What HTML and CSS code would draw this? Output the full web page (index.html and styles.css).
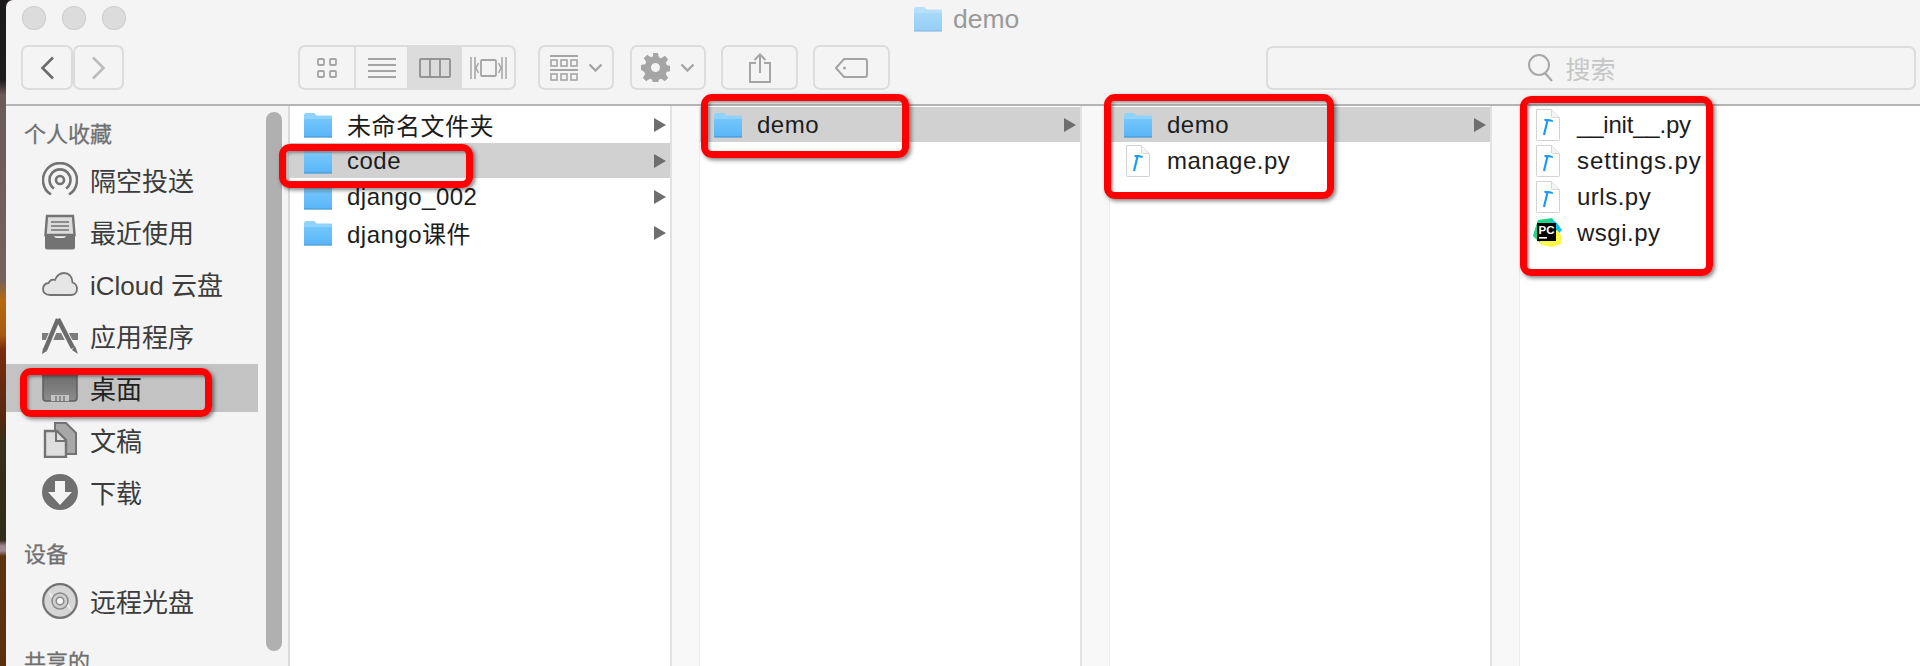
FILE: index.html
```html
<!DOCTYPE HTML>
<html>
	<head>
		<title>demo</title>
		<meta charset="UTF-8">
		<link rel="stylesheet" href="styles.css">
	</head>
	<body>
		<svg class="defs" width="0" height="0">
			<defs>
				<linearGradient id="folderFill" x1="0" y1="0" x2="0" y2="1">
					<stop offset="0" stop-color="#74c6fb"/>
					<stop offset="1" stop-color="#58b5f8"/>
				</linearGradient>
				<linearGradient id="deskFill" x1="0" y1="0" x2="0" y2="1">
					<stop offset="0" stop-color="#6a6a6a"/>
					<stop offset="1" stop-color="#8c8c8c"/>
				</linearGradient>
				<symbol id="folder" viewBox="0 0 30 26">
					<path d="M1 3.5C1 2 2 1 3.5 1h6.5c1.2 0 1.8.5 2.6 1.4l1 1.1H28c.6 0 1 .4 1 1V25H1z" fill="#8fd2fb"/>
					<path d="M1 7h28v17.2c0 .7-.4 1.1-1 1.1H2c-.6 0-1-.4-1-1.1z" fill="url(#folderFill)"/>
					<path d="M1 24.4h28v.6c0 .3-.3.6-.7.6H1.7c-.4 0-.7-.3-.7-.6z" fill="#3f93d0"/>
				</symbol>
				<symbol id="pyfile" viewBox="0 0 30 32">
					<path d="M3.5 .5h15l8 8v22a1 1 0 0 1-1 1h-21a1 1 0 0 1-1-1z" fill="#fff" stroke="#d2d2d2"/>
					<path d="M18.500 .5v7a1 1 0 0 0 1 1h7" fill="#f4f4f4" stroke="#d8d8d8"/>
					<path d="M11 26L14.600 11" stroke="#1c9bf0" stroke-width="2.200" fill="none"/>
					<path d="M11 10.400C13.500 9.800 17 10 20 11.400L19.800 13C18 12.300 15.500 12 12 12.200z" fill="#1c9bf0"/>
				</symbol>
				<symbol id="arrow" viewBox="0 0 12 14">
					<path d="M0 0L12 7L0 14z"/>
				</symbol>
				<symbol id="updown" viewBox="0 0 15 9">
					<path d="M1.5 1.5L7.5 7.5L13.5 1.5" fill="none" stroke="#a5a5a5" stroke-width="2.4"/>
				</symbol>
			</defs>
		</svg>

		<div class="desktop"></div>

		<div class="window">
			<div class="titlebar">
				<span class="light"></span>
				<span class="light"></span>
				<span class="light"></span>
				<div class="title">
					<svg class="title-folder" width="30" height="26"><use href="#folder"/></svg>
					<span>demo</span>
				</div>
			</div>

			<div class="toolbar">
				<div class="tool-group nav">
					<div class="tool nav-btn">
						<svg width="15" height="24" viewBox="0 0 15 24"><path d="M13 1.5L2.5 12L13 22.5" fill="none" stroke="#6c6c6c" stroke-width="2.6"/></svg>
					</div>
					<div class="tool nav-btn">
						<svg width="15" height="24" viewBox="0 0 15 24"><path d="M2 1.5L12.5 12L2 22.5" fill="none" stroke="#bcbcbc" stroke-width="2.6"/></svg>
					</div>
				</div>

				<div class="tool-group views">
					<div class="view view-icons">
						<svg width="20" height="20" viewBox="0 0 20 20" fill="none" stroke="#a5a5a5" stroke-width="1.8">
							<rect x="1" y="1" width="6" height="6" rx="1"/><rect x="13" y="1" width="6" height="6" rx="1"/>
							<rect x="1" y="13" width="6" height="6" rx="1"/><rect x="13" y="13" width="6" height="6" rx="1"/>
						</svg>
					</div>
					<div class="view view-list">
						<svg width="28" height="20" viewBox="0 0 28 20" stroke="#a5a5a5" stroke-width="2">
							<path d="M0 1h28M0 7h28M0 13h28M0 19h28"/>
						</svg>
					</div>
					<div class="view view-columns current">
						<svg width="32" height="20" viewBox="0 0 32 20" fill="none" stroke="#969696" stroke-width="2">
							<rect x="1" y="1" width="30" height="18" rx="1"/><path d="M11 1v18M21 1v18"/>
						</svg>
					</div>
					<div class="view view-cover">
						<svg width="37" height="22" viewBox="0 0 37 22" fill="none" stroke="#a5a5a5" stroke-width="1.8">
							<rect x="11" y="3" width="15" height="16" rx="1"/>
							<path d="M1 0v22M5 0v22M32 0v22M36 0v22M8.500 6l-2.500 5 2.500 5M28.500 6l2.500 5-2.500 5" stroke-width="1.500"/>
						</svg>
					</div>
				</div>

				<div class="tool-group tool arrange">
					<svg width="28" height="26" viewBox="0 0 28 26" fill="none" stroke="#a5a5a5" stroke-width="1.600">
						<path d="M0 1h28M0 15h28" stroke-width="2"/>
						<rect x="1" y="5" width="6" height="6"/><rect x="11" y="5" width="6" height="6"/><rect x="21" y="5" width="6" height="6"/>
						<rect x="1" y="19" width="6" height="6"/><rect x="11" y="19" width="6" height="6"/><rect x="21" y="19" width="6" height="6"/>
					</svg>
					<svg width="15" height="9"><use href="#updown"/></svg>
				</div>

				<div class="tool-group tool action">
					<svg width="29" height="29" viewBox="0 0 29 29">
						<path fill="#a5a5a5" fill-rule="evenodd" d="M12 0h5l.8 4.200 2.400 1 3.600-2.400 3.400 3.400-2.400 3.600 1 2.400 4.200.8v5l-4.200.8-1 2.400 2.400 3.600-3.400 3.400-3.600-2.400-2.400 1-.8 4.200h-5l-.8-4.200-2.400-1-3.600 2.400-3.400-3.400 2.400-3.600-1-2.400L0 17v-5l4.200-.8 1-2.400-2.400-3.600 3.400-3.400 3.600 2.400 2.400-1zM14.500 10a4.500 4.500 0 1 0 0 9 4.500 4.500 0 0 0 0-9z"/>
					</svg>
					<svg width="15" height="9"><use href="#updown"/></svg>
				</div>

				<div class="tool-group tool share">
					<svg width="22" height="30" viewBox="0 0 22 30" fill="none" stroke="#a5a5a5" stroke-width="2">
						<path d="M7 10H1v19h20V10h-6M11 20V2M5.500 7L11 1.500 16.500 7"/>
					</svg>
				</div>

				<div class="tool-group tool tag">
					<svg width="33" height="20" viewBox="0 0 33 20" fill="none" stroke="#a5a5a5" stroke-width="2">
						<path d="M9 1h21a2 2 0 0 1 2 2v14a2 2 0 0 1-2 2H9L1 10z"/>
						<circle cx="9.500" cy="10" r="1.500" fill="#a5a5a5" stroke="none"/>
					</svg>
				</div>

				<div class="search">
					<svg width="26" height="28" viewBox="0 0 26 28" fill="none" stroke="#a8a8a8" stroke-width="2">
						<circle cx="11" cy="11" r="10"/><path d="M17 19l7 8"/>
					</svg>
					<span>搜索</span>
				</div>
			</div>

			<div class="main">
				<div class="sidebar">
					<div class="side-list">
						<div class="side-head">个人收藏</div>
						<div class="side-item">
							<svg width="36" height="36" viewBox="0 0 36 36" fill="none" stroke="#737373" stroke-width="2.600">
								<path d="M9 32.500A17 17 0 1 1 27 32.500M12 26.500A10.500 10.500 0 1 1 24 26.500"/>
								<circle cx="18" cy="18" r="4"/>
							</svg>
							<span>隔空投送</span>
						</div>
						<div class="side-item">
							<svg width="36" height="36" viewBox="0 0 36 36">
								<path d="M5 2h26l1.500 19H3.500z" fill="#dcdcdc" stroke="#737373" stroke-width="2.400"/>
								<path d="M9 8h18M9 12h18M9 16h18" stroke="#737373" stroke-width="1.600"/>
								<path d="M3 20h8c1 3 2 4 4 4h6c2 0 3-1 4-4h8v13a2.500 2.500 0 0 1-2.500 2.500h-25A2.500 2.500 0 0 1 3 33z" fill="#737373"/>
							</svg>
							<span>最近使用</span>
						</div>
						<div class="side-item">
							<svg width="36" height="36" viewBox="0 0 36 36">
								<path d="M8 29C3 29 1 26 1 23c0-3.500 2.500-5.500 5.500-6C8 14 10.500 13 13 14c2-5 6-7 9-7 5 0 8.500 4 8.500 9.500 3 1 4.500 3.500 4.500 6.500 0 3.500-2.500 6-6 6z" fill="#e6e6e6" stroke="#737373" stroke-width="1.800"/>
							</svg>
							<span>iCloud 云盘</span>
						</div>
						<div class="side-item">
							<svg width="36" height="36" viewBox="0 0 36 36" fill="none">
								<path d="M0 15h36v7H0z" fill="#7c7c7c"/>
								<path d="M15.500 3L3 33" stroke="#f4f4f4" stroke-width="7"/>
								<path d="M17 3l14 28" stroke="#f4f4f4" stroke-width="7"/>
								<path d="M16 1L3 32" stroke="#6b6b6b" stroke-width="4.500"/>
								<path d="M16 1l15 29" stroke="#6b6b6b" stroke-width="4.500"/>
								<path d="M1 30l-1 6 5-3zM33 28l3 8-6-4z" fill="#6b6b6b"/>
							</svg>
							<span>应用程序</span>
						</div>
						<div class="side-item selected">
							<svg width="36" height="36" viewBox="0 0 36 36">
								<rect x="1" y="2" width="34" height="29" rx="3" fill="url(#deskFill)" stroke="#5f5f5f" stroke-width="1.500"/>
								<rect x="9" y="25" width="18" height="6" fill="#c3c3c3"/>
								<path d="M14 26v5M18 26v5M22 26v5" stroke="#787878" stroke-width="1.500"/>
							</svg>
							<span>桌面</span>
						</div>
						<div class="side-item">
							<svg width="36" height="36" viewBox="0 0 36 36">
								<path d="M13 1h11l10 10v21H13z" fill="#a8a8a8" stroke="#737373" stroke-width="2"/>
								<path d="M3 9h12l9 9v17H3z" fill="#dedede" stroke="#737373" stroke-width="2.400"/>
								<path d="M14 9v10h10" fill="none" stroke="#737373" stroke-width="2"/>
							</svg>
							<span>文稿</span>
						</div>
						<div class="side-item">
							<svg width="36" height="36" viewBox="0 0 36 36">
								<circle cx="18" cy="18" r="18" fill="#707070"/>
								<path d="M13 7h10v11h7L18 31 6 18h7z" fill="#f4f4f4"/>
							</svg>
							<span>下载</span>
						</div>
						<div class="side-head head-device">设备</div>
						<div class="side-item">
							<svg width="36" height="36" viewBox="0 0 36 36">
								<circle cx="18" cy="18" r="16.800" fill="#d6d6d6" stroke="#737373" stroke-width="2.200"/>
								<path d="M6 8l8 7-3 4zM30 28l-8-7 3-4z" fill="#f0f0f0"/>
								<circle cx="18" cy="18" r="8" fill="#cfcfcf" stroke="#8a8a8a" stroke-width="1.500"/>
								<circle cx="18" cy="18" r="3.800" fill="#f4f4f4" stroke="#8a8a8a" stroke-width="1.500"/>
							</svg>
							<span>远程光盘</span>
						</div>
						<div class="side-head head-shared">共享的</div>
					</div>
					<div class="side-scroll"></div>
				</div>

				<div class="column">
					<div class="row">
						<svg class="icon" width="30" height="26"><use href="#folder"/></svg>
						<span>未命名文件夹</span>
						<svg class="more" width="12" height="14"><use href="#arrow"/></svg>
					</div>
					<div class="row selected">
						<svg class="icon" width="30" height="26"><use href="#folder"/></svg>
						<span>code</span>
						<svg class="more" width="12" height="14"><use href="#arrow"/></svg>
					</div>
					<div class="row">
						<svg class="icon" width="30" height="26"><use href="#folder"/></svg>
						<span>django_002</span>
						<svg class="more" width="12" height="14"><use href="#arrow"/></svg>
					</div>
					<div class="row">
						<svg class="icon" width="30" height="26"><use href="#folder"/></svg>
						<span>django课件</span>
						<svg class="more" width="12" height="14"><use href="#arrow"/></svg>
					</div>
				</div>
				<div class="col-gap"></div>

				<div class="column">
					<div class="row selected">
						<svg class="icon" width="30" height="26"><use href="#folder"/></svg>
						<span>demo</span>
						<svg class="more" width="12" height="14"><use href="#arrow"/></svg>
					</div>
				</div>
				<div class="col-gap"></div>

				<div class="column">
					<div class="row selected">
						<svg class="icon" width="30" height="26"><use href="#folder"/></svg>
						<span>demo</span>
						<svg class="more" width="12" height="14"><use href="#arrow"/></svg>
					</div>
					<div class="row">
						<svg class="icon" width="30" height="32"><use href="#pyfile"/></svg>
						<span>manage.py</span>
					</div>
				</div>
				<div class="col-gap"></div>

				<div class="column last">
					<div class="row">
						<svg class="icon" width="30" height="32"><use href="#pyfile"/></svg>
						<span class="tight">__init__.py</span>
					</div>
					<div class="row">
						<svg class="icon" width="30" height="32"><use href="#pyfile"/></svg>
						<span class="wide">settings.py</span>
					</div>
					<div class="row">
						<svg class="icon" width="30" height="32"><use href="#pyfile"/></svg>
						<span>urls.py</span>
					</div>
					<div class="row">
						<svg class="icon" width="30" height="30" viewBox="0 0 30 30">
							<path d="M5 2L19 0l5 7-24 11z" fill="#21d789"/>
							<path d="M0 18L5 2l6 6-2 19z" fill="#21d789"/>
							<path d="M17 1l7 4 5 7-6 6z" fill="#07c3f2"/>
							<path d="M9 27l-3-3 18-12 5 6-1 8-9 3z" fill="#fcf84a"/>
							<rect x="4" y="5" width="19" height="18" fill="#000"/>
							<text class="pc-label" x="5.500" y="15.500">PC</text>
							<rect x="6" y="19" width="8" height="1.600" fill="#fff"/>
						</svg>
						<span>wsgi.py</span>
					</div>
				</div>
			</div>
		</div>

		<!-- red annotations drawn on top of the screenshot -->
		<div class="mark mark-desktop"></div>
		<div class="mark mark-code"></div>
		<div class="mark mark-demo"></div>
		<div class="mark mark-manage"></div>
		<div class="mark mark-files"></div>
	</body>
</html>
```

FILE: styles.css
```css
html, body
	{
		margin: 0;
		height: 666px;
		overflow: hidden;
	}
body
	{
		position: relative;
		display: flex;
		font-family: "Liberation Sans", "Noto Sans CJK SC", sans-serif;
		background: #1c1a1c;
	}
.defs
	{
		position: absolute;
	}

/* bit of wallpaper left of the window */
.desktop
	{
		flex: 0 0 6px;
		background: linear-gradient(to bottom, #1b191b 0, #1f1c1e 80px, #6a5a58 95px, #74625f 280px, #b5690f 300px, #a85a10 335px, #7a2c10 350px, #55280f 420px, #38301a 440px, #2e2c18 540px, #a08890 546px, #a08890 551px, #5a3410 556px, #5c2f10 666px);
	}

.window
	{
		flex: 1;
		display: flex;
		flex-direction: column;
		min-width: 0;
		background: #f4f4f4;
		border-top-left-radius: 7px;
	}

.titlebar
	{
		display: flex;
		align-items: center;
		gap: 16px;
		height: 24px;
		padding: 6px 0 0 16px;
	}
.light
	{
		width: 24px;
		height: 24px;
		border-radius: 50%;
		background: #dcdcdc;
		box-shadow: inset 0 0 0 1px #d0d0d0;
	}
.title
	{
		display: flex;
		align-items: center;
		gap: 10px;
		margin-left: 771px;
		padding-top: 2px;
		font-size: 26.500px;
		color: #9a9a9a;
	}
.title-folder
	{
		opacity: .6;
	}

.toolbar
	{
		display: flex;
		height: 45px;
		margin-top: 15px;
		padding: 0 4px 14px 15px;
		border-bottom: 2px solid #b4b4b4;
	}
.tool-group
	{
		display: flex;
		height: 45px;
		box-sizing: border-box;
	}
.tool
	{
		align-items: center;
		justify-content: center;
		box-sizing: border-box;
		height: 45px;
		border: 2px solid #dcdcdc;
		border-radius: 7px;
	}
.nav-btn
	{
		display: flex;
		width: 52px;
	}
.nav-btn + .nav-btn
	{
		width: 51px;
	}
.views
	{
		width: 218px;
		margin-left: 174px;
		border: 2px solid #dcdcdc;
		border-radius: 7px;
		overflow: hidden;
	}
.view
	{
		display: flex;
		align-items: center;
		justify-content: center;
		box-sizing: border-box;
		border-right: 2px solid #dcdcdc;
	}
.view-icons
	{
		width: 56px;
	}
.view-list, .view-columns
	{
		width: 53px;
	}
.view-cover
	{
		flex: 1;
		border-right: 0;
	}
.view.current
	{
		background: #dcdcdc;
	}
.arrange, .action
	{
		gap: 10px;
		width: 76px;
	}
.arrange
	{
		margin-left: 22px;
	}
.action
	{
		margin-left: 16px;
	}
.share, .tag
	{
		width: 77px;
		margin-left: 15px;
	}
.search
	{
		flex: 1;
		display: flex;
		align-items: center;
		justify-content: center;
		gap: 11px;
		box-sizing: border-box;
		height: 44px;
		margin: 1px 0 0 376px;
		padding-right: 38px;
		border: 2px solid #dcdcdc;
		border-radius: 7px;
		font-size: 25px;
		color: #c6c6c6;
	}

.main
	{
		flex: 1;
		display: flex;
		min-height: 0;
		background: #fff;
	}

.sidebar
	{
		flex: 0 0 284px;
		box-sizing: border-box;
		display: flex;
		overflow: hidden;
		background: #f4f4f4;
		border-right: 2px solid #dadada;
	}
.side-list
	{
		flex: 0 0 252px;
	}
.side-head
	{
		height: 36px;
		margin: 11px 0 3px;
		padding-left: 18px;
		line-height: 36px;
		font-size: 22px;
		color: #707070;
		-webkit-text-stroke: .3px #707070;
	}
.head-device
	{
		margin: 21px 0 4px;
	}
.head-shared
	{
		margin-top: 20px;
	}
.side-item
	{
		display: flex;
		align-items: center;
		gap: 12px;
		height: 48px;
		margin-bottom: 4px;
		padding-left: 36px;
		font-size: 26px;
		color: #3c3c3c;
	}
.side-item span
	{
		margin-bottom: 2px;
	}
.side-item.selected
	{
		background: #c3c3c3;
		color: #222;
	}
.side-scroll
	{
		flex: 0 0 16px;
		height: 539px;
		margin: 6px 0 0 8px;
		border-radius: 8px;
		background: #b0b0b0;
	}

.column
	{
		flex: 0 0 380px;
		box-sizing: border-box;
		padding-top: 1px;
		background: #fff;
	}
.column.last
	{
		flex: 1;
	}
.col-gap
	{
		flex: 0 0 30px;
		box-sizing: border-box;
		background: #f8f8f8;
		border-left: 2px solid #e2e2e2;
		border-right: 1px solid #ececec;
	}
.row
	{
		display: flex;
		align-items: center;
		gap: 14px;
		height: 35px;
		margin-bottom: 1px;
		padding-left: 13px;
		font-size: 24px;
		letter-spacing: .5px;
		color: #1c1c1c;
		white-space: nowrap;
	}
.row.selected
	{
		background: #d1d1d1;
	}
.row .tight
	{
		letter-spacing: -.2px;
	}
.row .wide
	{
		letter-spacing: .9px;
	}
.icon
	{
		flex: none;
	}
.more
	{
		margin-left: auto;
		margin-right: 4px;
		fill: #6e6e6e;
	}
.pc-label
	{
		font-family: "Liberation Sans", sans-serif;
		font-size: 11.500px;
		font-weight: bold;
		letter-spacing: 0;
		fill: #fff;
	}

/* annotations */
.mark
	{
		position: absolute;
		box-sizing: border-box;
		border: 7px solid #fe0000;
		border-radius: 11px;
		box-shadow: 2px 2px 4px rgba(0, 0, 0, .5), inset 2px 2px 3px rgba(0, 0, 0, .35);
	}
.mark-desktop
	{
		left: 20px;
		top: 368px;
		width: 192px;
		height: 49px;
	}
.mark-code
	{
		left: 279px;
		top: 144px;
		width: 194px;
		height: 44px;
	}
.mark-demo
	{
		left: 701px;
		top: 94px;
		width: 208px;
		height: 64px;
	}
.mark-manage
	{
		left: 1104px;
		top: 94px;
		width: 230px;
		height: 105px;
	}
.mark-files
	{
		left: 1520px;
		top: 96px;
		width: 193px;
		height: 180px;
	}
```
